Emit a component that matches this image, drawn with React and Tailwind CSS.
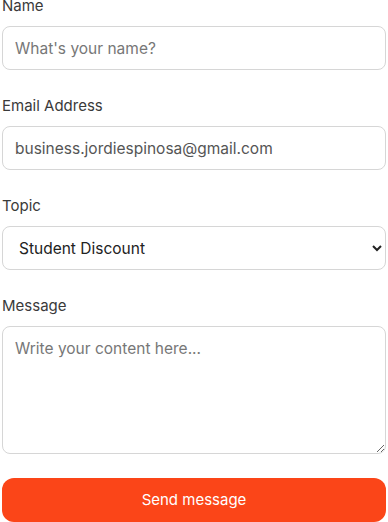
import { useState } from 'react';

export default function App() {
  const [topic, setTopic] = useState('student');

  return (
    <div className="bg-white w-[388px] h-[522px] overflow-hidden font-['Inter',_'Liberation_Sans',_sans-serif]">
      <form className="px-[2px] -mt-[6px] space-y-6" onSubmit={(e) => e.preventDefault()}>
        <Field label="Name">
          <input placeholder="What's your name?"
            className="w-full h-[44px] rounded-lg border border-[#d6d6d6] px-3 text-[15.5px] text-[#555] placeholder:text-[#777] outline-none" />
        </Field>

        <Field label="Email Address">
          <input defaultValue="business.jordiespinosa@gmail.com"
            className="w-full h-[44px] rounded-lg border border-[#d6d6d6] px-3 text-[15.5px] text-[#555] outline-none" />
        </Field>

        <Field label="Topic">
          <select value={topic} onChange={(e) => setTopic(e.target.value)}
            className="w-full h-[44px] rounded-lg border border-[#d6d6d6] px-3 text-[15.5px] text-[#222] bg-white outline-none">
            <option value="student">Student Discount</option>
            <option value="general">General</option>
          </select>
        </Field>

        <Field label="Message">
          <textarea placeholder="Write your content here..."
            className="block w-full h-[128px] rounded-lg border border-[#d6d6d6] px-3 py-2.5 text-[15.5px] text-[#555] placeholder:text-[#777] outline-none" />
        </Field>

        <button className="w-full h-[44px] rounded-xl bg-[#fb4518] text-white text-[15px]">
          Send message
        </button>
      </form>
    </div>
  );
}

function Field({ label, children }) {
  return (
    <div>
      <label className="block mb-2 text-[15px] leading-6 text-[#3a3a3a]">{label}</label>
      {children}
    </div>
  );
}
